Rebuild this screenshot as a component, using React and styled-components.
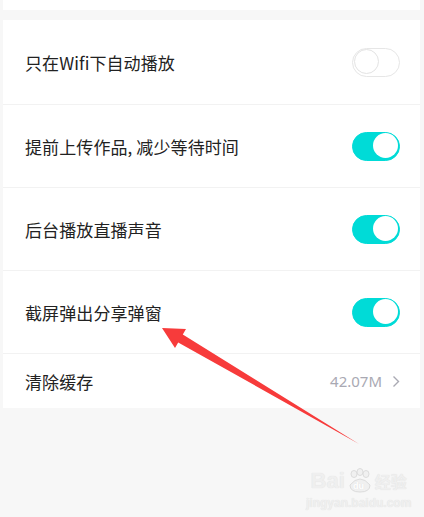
import React from "react";
import styled, { createGlobalStyle } from "styled-components";

const Global = createGlobalStyle`
  html, body { margin: 0; padding: 0; }
  body {
    background: #f7f7f7;
    font-family: "Noto Sans CJK SC", "Noto Sans", sans-serif;
    width: 424px;
    height: 517px;
    overflow: hidden;
  }
`;

const Page = styled.div`
  position: relative;
  width: 424px;
  height: 517px;
  padding: 0 4px 0 3px;
  box-sizing: border-box;
  background: #f7f7f7;
`;

const TopStrip = styled.div`
  height: 10px;
  background: #ffffff;
`;

const Gap = styled.div`
  height: 10px;
`;

const Card = styled.div`
  background: #ffffff;
  display: flex;
  flex-direction: column;
`;

const Row = styled.div`
  height: ${(p) => p.$h}px;
  display: flex;
  align-items: center;
  justify-content: space-between;
  padding: 0 20px 0 22px;
  border-top: ${(p) => (p.$first ? "none" : "1px solid #f2f2f2")};
  box-sizing: border-box;
`;

const Label = styled.span`
  font-size: 17px;
  color: #222222;
  letter-spacing: 0.1px;
`;

const Toggle = styled.div`
  position: relative;
  width: 48px;
  height: 29px;
  border-radius: 15px;
  box-sizing: border-box;
  background: ${(p) => (p.$on ? "#00dbd7" : "#ffffff")};
  border: 1.5px solid ${(p) => (p.$on ? "#00dbd7" : "#e6e6e6")};
`;

const Knob = styled.div`
  position: absolute;
  top: 0.5px;
  left: ${(p) => (p.$on ? "20px" : "0.5px")};
  width: 25px;
  height: 25px;
  border-radius: 50%;
  background: #ffffff;
  box-sizing: border-box;
  border: ${(p) => (p.$on ? "none" : "1.5px solid #e3e3e3")};
`;

const Value = styled.span`
  display: flex;
  align-items: center;
  gap: 10px;
  font-family: "Noto Sans", sans-serif;
  font-size: 15px;
  color: #a9a9b3;
`;

const Overlay = styled.svg`
  position: absolute;
  left: 0;
  top: 0;
  pointer-events: none;
`;

const Watermark = styled.div`
  position: absolute;
  left: 306px;
  top: 468px;
  display: flex;
  flex-direction: column;
  align-items: center;
  color: #efefef;
  text-shadow: 0 0 1px #dcdcdc;
`;

const WmTop = styled.div`
  display: flex;
  align-items: center;
  gap: 2px;
  font-family: "Liberation Sans", sans-serif;
  font-weight: bold;
  font-size: 22px;
  line-height: 24px;
`;

const WmCjk = styled.span`
  font-family: "Noto Sans CJK SC", sans-serif;
  font-size: 16px;
  font-weight: bold;
`;

const WmUrl = styled.div`
  font-family: "Liberation Sans", sans-serif;
  font-size: 12px;
  font-weight: bold;
  margin-top: 2px;
`;

const rows = [
  { label: "只在Wifi下自动播放", on: false, h: 84 },
  { label: "提前上传作品, 减少等待时间", on: true, h: 83 },
  { label: "后台播放直播声音", on: true, h: 83 },
  { label: "截屏弹出分享弹窗", on: true, h: 83 },
];

export default function App() {
  return (
    <>
      <Global />
      <Page>
        <TopStrip />
        <Gap />
        <Card>
          {rows.map((r, i) => (
            <Row key={r.label} $h={r.h} $first={i === 0}>
              <Label>{r.label}</Label>
              <Toggle $on={r.on}>
                <Knob $on={r.on} />
              </Toggle>
            </Row>
          ))}
          <Row $h={55}>
            <Label>清除缓存</Label>
            <Value>
              42.07M
              <svg width="8" height="13" viewBox="0 0 8 13">
                <path d="M1.5 1.5 L6.5 6.5 L1.5 11.5" fill="none" stroke="#a9a9b3" strokeWidth="1.4" />
              </svg>
            </Value>
          </Row>
        </Card>
        <Watermark>
          <WmTop>
            <span>Bai</span>
            <svg width="26" height="26" viewBox="0 0 26 26">
              <g fill="#f0f0f0" stroke="#dcdcdc" strokeWidth="1">
                <ellipse cx="7" cy="6" rx="3" ry="3.5" />
                <ellipse cx="13" cy="4" rx="3" ry="3.5" />
                <ellipse cx="19" cy="6" rx="3" ry="3.5" />
                <path d="M3 17 Q13 5 23 17 Q23 24 13 24 Q3 24 3 17Z" />
              </g>
              <text x="6" y="21" fontSize="9" fontFamily="Liberation Sans" fontWeight="bold" fill="#ffffff">du</text>
            </svg>
            <WmCjk>经验</WmCjk>
          </WmTop>
          <WmUrl>jingyan.baidu.com</WmUrl>
        </Watermark>
        <Overlay width="424" height="517" viewBox="0 0 424 517">
          <polygon
            points="162,328 186,329 182.8,334.6 359,444 178.2,342.4 175,348"
            fill="#f73b3b"
          />
        </Overlay>
      </Page>
    </>
  );
}
